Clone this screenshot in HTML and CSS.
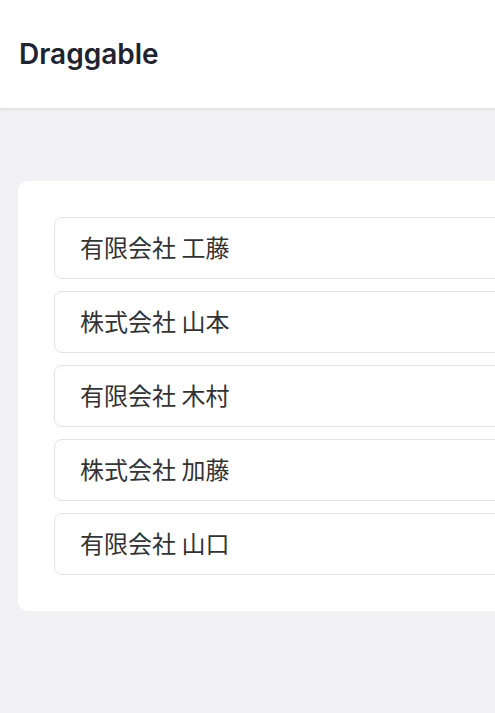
FILE: index.html
```html
<!DOCTYPE html>
<html lang="ja">
<head>
    <meta charset="UTF-8">
    <meta name="viewport" content="width=device-width, initial-scale=1.0">
    <title>Draggable</title>
    <link rel="stylesheet" href="styles.css">
</head>
<body>

    <!-- Header -->
    <header class="app-header">
        <h1>Draggable</h1>
    </header>

    <!-- List card -->
    <main class="page">
        <div class="card">
            <ul class="drag-list">
                <li class="drag-item" draggable="true">有限会社 工藤</li>
                <li class="drag-item" draggable="true">株式会社 山本</li>
                <li class="drag-item" draggable="true">有限会社 木村</li>
                <li class="drag-item" draggable="true">株式会社 加藤</li>
                <li class="drag-item" draggable="true">有限会社 山口</li>
            </ul>
        </div>
    </main>

</body>
</html>
```

FILE: styles.css
```css
/* General styles */
html {
    overflow-x: hidden;
}
body {
    margin: 0;
    min-width: 760px;
    background-color: #f2f2f4;
    font-family: "Noto Sans CJK JP", "Noto Sans", sans-serif;
    color: #333;
}

/* Header */
.app-header {
    height: 108px;
    display: flex;
    align-items: center;
    padding: 0 19px;
    background-color: #fff;
    box-shadow: 0 1px 3px rgba(0, 0, 0, 0.12);
}
.app-header h1 {
    margin: 0;
    font-family: Inter, "Open Sans", sans-serif;
    font-size: 28px;
    font-weight: 600;
    color: #1f2330;
}

/* Card with list */
.page {
    padding: 73px 0 0 18px;
}
.card {
    background-color: #fff;
    border-radius: 10px;
    padding: 36px;
}
.drag-list {
    list-style: none;
    margin: 0;
    padding: 0;
    display: flex;
    flex-direction: column;
    gap: 12px;
}
.drag-item {
    box-sizing: border-box;
    height: 62px;
    display: flex;
    align-items: center;
    padding: 0 25px 3px;
    border: 1px solid #e3e3e6;
    border-radius: 8px;
    background-color: #fff;
    font-size: 24px;
    line-height: 1;
    cursor: grab;
}
```
